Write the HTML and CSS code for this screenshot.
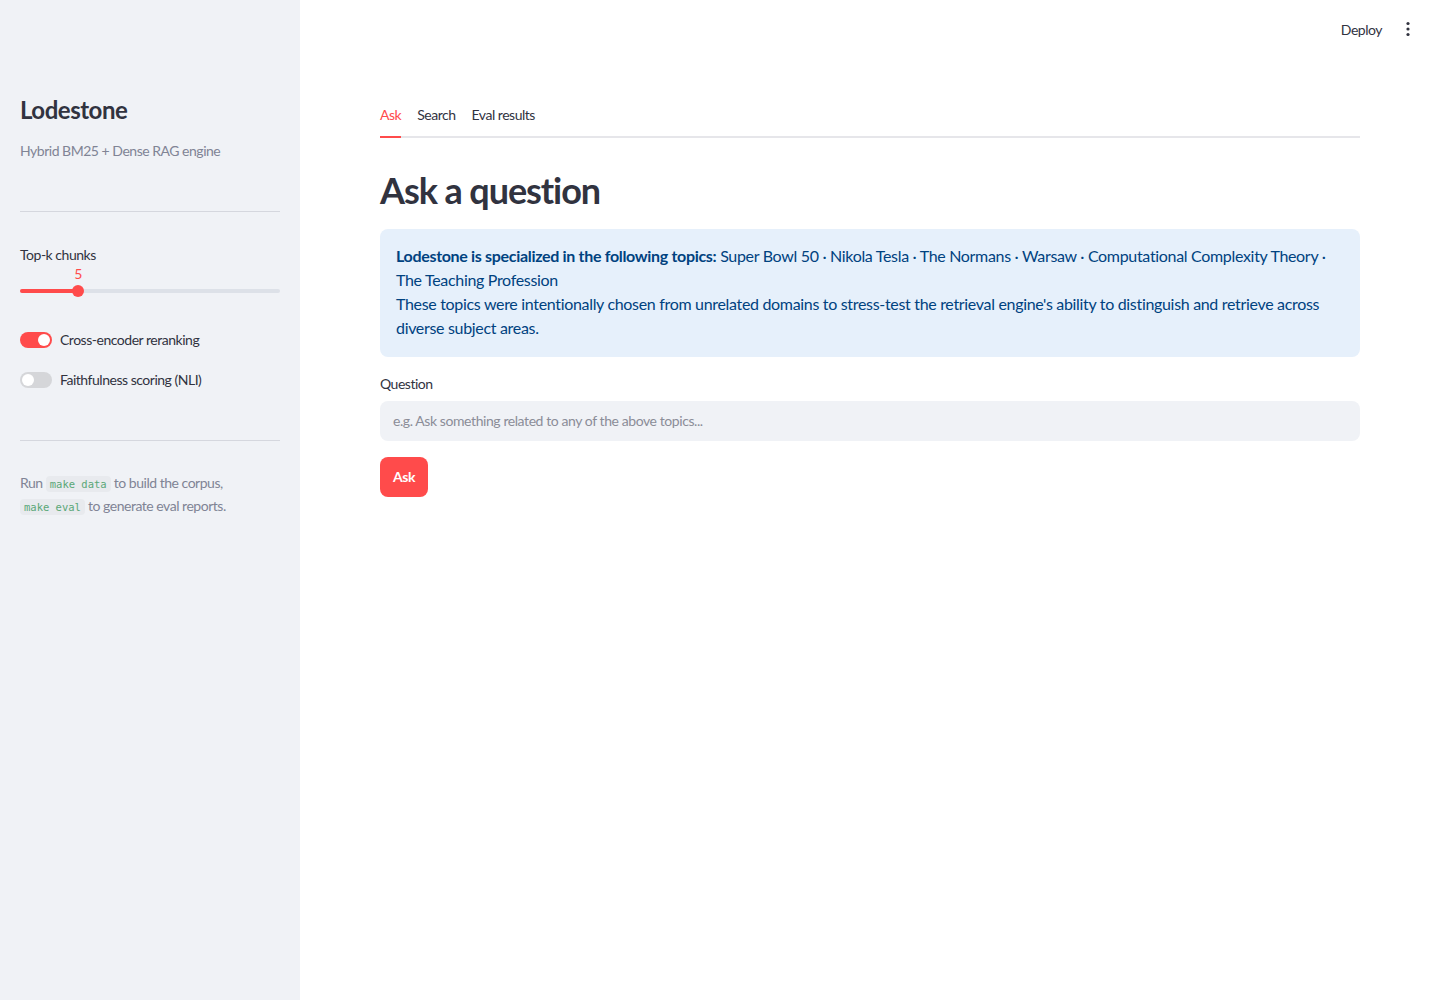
FILE: index.html
```html
<!DOCTYPE html>
<html lang="en">
<head>
    <meta charset="UTF-8">
    <meta name="viewport" content="width=device-width, initial-scale=1.0">
    <title>Lodestone</title>
    <link rel="stylesheet" href="styles.css">
</head>
<body>
    <div class="app">
        <aside class="sidebar">
            <h2 class="brand">Lodestone</h2>
            <p class="caption">Hybrid BM25 + Dense RAG engine</p>
            <hr class="divider">

            <div class="slider">
                <div class="label">Top-k chunks</div>
                <div class="slider-track">
                    <div class="slider-fill" style="width: 58px;"></div>
                    <div class="slider-thumb" style="left: 58px;">
                        <span class="slider-value">5</span>
                    </div>
                </div>
            </div>

            <label class="toggle">
                <span class="switch on"><span class="knob"></span></span>
                Cross-encoder reranking
            </label>
            <label class="toggle">
                <span class="switch"><span class="knob"></span></span>
                Faithfulness scoring (NLI)
            </label>

            <hr class="divider">

            <p class="caption note">Run <code>make data</code> to build the corpus, <code>make eval</code> to generate eval reports.</p>
        </aside>

        <main class="main">
            <header class="toolbar">
                <span class="deploy">Deploy</span>
                <svg class="menu" width="16" height="16" viewBox="0 0 16 16">
                    <circle cx="8" cy="2.5" r="1.6" fill="#31333f"/>
                    <circle cx="8" cy="8" r="1.6" fill="#31333f"/>
                    <circle cx="8" cy="13.5" r="1.6" fill="#31333f"/>
                </svg>
            </header>

            <div class="content">
                <nav class="tabs">
                    <span class="tab active">Ask</span>
                    <span class="tab">Search</span>
                    <span class="tab">Eval results</span>
                </nav>

                <h1>Ask a question</h1>

                <div class="info">
                    <p><strong>Lodestone is specialized in the following topics:</strong> Super Bowl 50 · Nikola Tesla · The Normans · Warsaw · Computational Complexity Theory · <span class="topic">The Teaching Profession</span></p>
                    <p>These topics were intentionally chosen from unrelated domains to stress-test the retrieval engine's ability to distinguish and retrieve across diverse subject areas.</p>
                </div>

                <div class="field">
                    <div class="label">Question</div>
                    <input type="text" placeholder="e.g. Ask something related to any of the above topics...">
                </div>

                <button class="btn">Ask</button>
            </div>
        </main>
    </div>
</body>
</html>
```

FILE: styles.css
```css
* {
    box-sizing: border-box;
}
body {
    margin: 0;
    font-family: Lato, "Noto Sans", sans-serif;
    letter-spacing: -0.03em;
    color: #31333f;
    background: #fff;
}
.app {
    display: flex;
    min-height: 1000px;
}
.sidebar {
    width: 300px;
    flex-shrink: 0;
    background: #f0f2f6;
    padding: 94px 20px 20px;
}
.brand {
    margin: 0;
    font-size: 24px;
    font-weight: 700;
    line-height: 32px;
}
.caption {
    margin: 15px 0 0;
    font-size: 14px;
    color: #808495;
    line-height: 20px;
}
.divider {
    border: none;
    border-top: 1px solid #d5d7de;
    margin: 50px 0 33px;
}
.label {
    font-size: 14px;
    line-height: 20px;
}
.slider {
    margin-bottom: 37px;
}
.slider-track {
    position: relative;
    height: 4px;
    background: #dde1e8;
    border-radius: 2px;
    margin-top: 24px;
}
.slider-fill {
    height: 4px;
    background: #ff4b4b;
    border-radius: 2px;
}
.slider-thumb {
    position: absolute;
    top: -4px;
    width: 12px;
    height: 12px;
    margin-left: -6px;
    border-radius: 50%;
    background: #ff4b4b;
}
.slider-value {
    position: absolute;
    top: -19px;
    left: 0;
    width: 12px;
    text-align: center;
    font-size: 14px;
    line-height: 16px;
    color: #ff4b4b;
}
.toggle {
    display: flex;
    align-items: center;
    gap: 8px;
    font-size: 14px;
    line-height: 20px;
    margin-bottom: 20px;
}
.switch {
    position: relative;
    width: 32px;
    height: 16px;
    border-radius: 8px;
    background: #d5d6d9;
}
.switch .knob {
    position: absolute;
    top: 2px;
    left: 2px;
    width: 12px;
    height: 12px;
    border-radius: 50%;
    background: #fff;
}
.switch.on {
    background: #ff4b4b;
}
.switch.on .knob {
    left: 18px;
}
.sidebar .toggle + .divider {
    margin: 50px 0 30px;
}
.sidebar .divider + .note {
    margin-top: 0;
}
.note {
    line-height: 23px;
}
code {
    font-family: "DejaVu Sans Mono", monospace;
    font-size: 10.5px;
    line-height: 14px;
    letter-spacing: 0;
    white-space: nowrap;
    color: #5aa777;
    background: #e8eaee;
    padding: 2px 4px;
    border-radius: 4px;
}
.main {
    flex: 1;
}
.toolbar {
    display: flex;
    justify-content: flex-end;
    align-items: center;
    gap: 18px;
    height: 58px;
    padding-right: 24px;
}
.deploy {
    font-size: 14px;
}
.content {
    padding: 38px 80px 0;
}
.tabs {
    display: flex;
    gap: 16px;
    border-bottom: 2px solid #e6e6ea;
    height: 42px;
}
.tab {
    font-size: 14px;
    line-height: 38px;
}
.tab.active {
    color: #ff4b4b;
    border-bottom: 2px solid #ff4b4b;
    margin-bottom: -2px;
}
h1 {
    margin: 28px 0 15px;
    font-size: 36px;
    font-weight: 700;
    line-height: 48px;
    letter-spacing: -0.03em;
}
.info {
    background: #e6f0fb;
    color: #004280;
    border-radius: 8px;
    padding: 15px 16px 17px;
    font-size: 16px;
    line-height: 24px;
    letter-spacing: -0.02em;
}
.info p {
    margin: 0;
}
.topic {
    white-space: nowrap;
}
.field {
    margin-top: 17px;
}
.field .label {
    margin-bottom: 7px;
}
input {
    width: 100%;
    height: 40px;
    border: none;
    border-radius: 8px;
    background: #f0f2f6;
    padding: 0 13px 2px;
    font-family: inherit;
    font-size: 14px;
    letter-spacing: -0.03em;
    color: #31333f;
}
input::placeholder {
    color: #8b8d98;
}
.btn {
    margin-top: 16px;
    height: 40px;
    padding: 0 13px 2px;
    border: none;
    border-radius: 8px;
    background: #ff4b4b;
    color: #fff;
    font-family: inherit;
    font-size: 14px;
    font-weight: 700;
    letter-spacing: -0.03em;
}
```
